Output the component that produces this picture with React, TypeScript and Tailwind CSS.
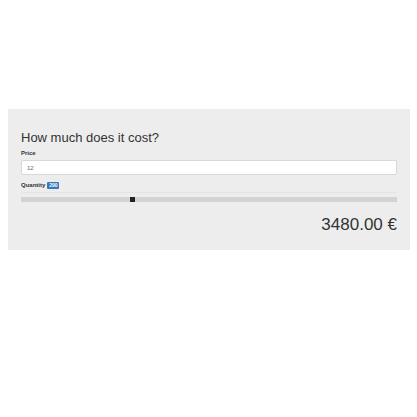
import { useState } from "react";

export default function App() {
  const [price, setPrice] = useState("12");
  const [quantity, setQuantity] = useState(290);
  const total = (Number(price) || 0) * quantity;

  return (
    <main className="min-h-screen bg-white pt-[109px] pr-[7px] pl-2 font-['Liberation_Sans',Arial,sans-serif] text-[#333333]">
      <form className="flex flex-col bg-[#ededed] px-[13px] pt-5 pb-[15px]">
        <h1 className="text-[13px] leading-[18px]">How much does it cost?</h1>
        <label htmlFor="price" className="mt-[2px] text-[6px] leading-[8px] font-bold">
          Price
        </label>
        <input
          id="price"
          type="text"
          inputMode="decimal"
          value={price}
          onChange={(e) => setPrice(e.target.value)}
          className="mt-[3px] h-[15px] w-full rounded-[2px] border border-[#d8d8d8] bg-white px-[5px] text-[6px] leading-[8px] text-[#666666] outline-none"
        />
        <div className="mt-[6px] flex h-[8px] items-center gap-[2px] text-[6px] leading-[8px] font-bold">
          <label htmlFor="quantity">Quantity</label>
          <output
            htmlFor="quantity"
            className="flex h-[7px] w-[12px] items-center justify-center rounded-[1px] bg-[#337ab7] text-[5px] leading-[7px] text-white"
          >
            {quantity}
          </output>
        </div>
        <div className="mt-[3px] flex h-[14px] items-center border-t border-[#e4e4e4]">
          <input
            id="quantity"
            type="range"
            min={0}
            max={990}
            value={quantity}
            onChange={(e) => setQuantity(Number(e.target.value))}
            className="h-[5px] w-full appearance-none bg-[#d3d3d3] outline-none [&::-webkit-slider-thumb]:h-[5px] [&::-webkit-slider-thumb]:w-[5px] [&::-webkit-slider-thumb]:appearance-none [&::-webkit-slider-thumb]:bg-[#222222]"
          />
        </div>
        <p className="mt-[9px] text-right text-[17px] leading-[20px]">{total.toFixed(2)} €</p>
      </form>
    </main>
  );
}
